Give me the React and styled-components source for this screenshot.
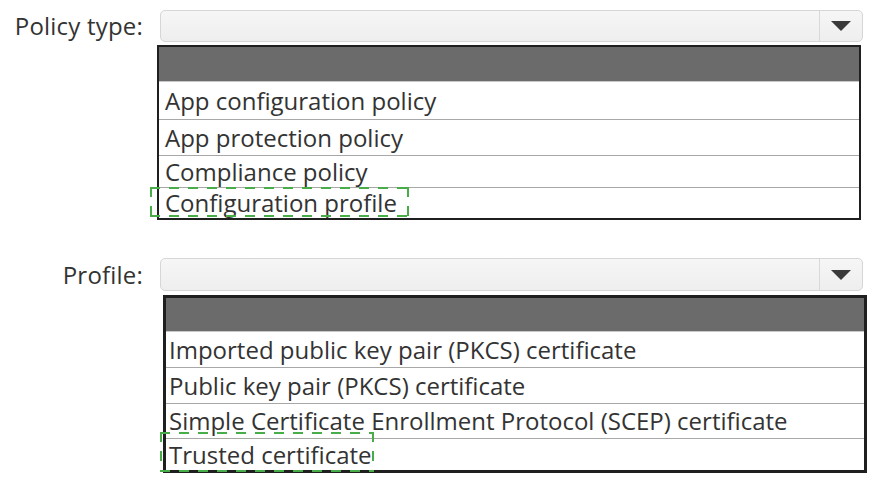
import React from 'react'
import styled, { createGlobalStyle } from 'styled-components'

const GlobalStyle = createGlobalStyle`
  html, body {
    margin: 0;
    padding: 0;
    background: #ffffff;
  }
  body {
    font-family: "Open Sans", "Liberation Sans", sans-serif;
    color: #333333;
  }
`

const sections = [
  {
    label: 'Policy type:',
    top: 10,
    selectHeight: 32,
    listOffset: -3,
    listGap: 3,
    border: 2,
    headerHeight: 34,
    pad: 6,
    options: [
      { text: 'App configuration policy', h: 38 },
      { text: 'App protection policy', h: 36 },
      { text: 'Compliance policy', h: 32 },
      { text: 'Configuration profile', h: 31, mark: { left: -9, top: -1, width: 259, height: 30 } },
    ],
  },
  {
    label: 'Profile:',
    top: 38,
    selectHeight: 33,
    listOffset: 3,
    listGap: 4,
    border: 3,
    headerHeight: 33,
    pad: 3,
    options: [
      { text: 'Imported public key pair (PKCS) certificate', h: 36 },
      { text: 'Public key pair (PKCS) certificate', h: 36 },
      { text: 'Simple Certificate Enrollment Protocol (SCEP) certificate', h: 35 },
      { text: 'Trusted certificate', h: 32, mark: { left: -6, top: -7, width: 214, height: 40 } },
    ],
  },
]

const App = () => {
  return (
    <>
      <GlobalStyle />
      <Page>
        {sections.map((s) => (
          <Section key={s.label} $top={s.top}>
            <Field>
              <Label>{s.label}</Label>
              <Select $height={s.selectHeight}>
                <SelectValue />
                <ArrowButton>
                  <Triangle />
                </ArrowButton>
              </Select>
            </Field>
            <List $offset={s.listOffset} $gap={s.listGap} $border={s.border}>
              <ListHeader $height={s.headerHeight} />
              {s.options.map((o) => (
                <Option key={o.text} $height={o.h} $pad={s.pad}>
                  {o.text}
                  {o.mark && (
                    <Mark
                      style={{
                        left: o.mark.left,
                        top: o.mark.top,
                        width: o.mark.width,
                        height: o.mark.height,
                      }}
                    />
                  )}
                </Option>
              ))}
            </List>
          </Section>
        ))}
      </Page>
    </>
  )
}

export default App

const Page = styled.div`
  width: 875px;
  height: 483px;
  overflow: hidden;
  display: flex;
  flex-direction: column;
`

const Section = styled.div`
  margin-top: ${(p) => p.$top}px;
  display: flex;
  flex-direction: column;
`

const Field = styled.div`
  display: grid;
  grid-template-columns: 143px 703px;
  column-gap: 17px;
  align-items: center;
`

const Label = styled.div`
  font-size: 24px;
  line-height: 1;
  letter-spacing: 0.2px;
  text-align: right;
  white-space: nowrap;
  color: #333333;
`

const Select = styled.div`
  height: ${(p) => p.$height}px;
  box-sizing: border-box;
  display: flex;
  border: 1px solid #d6d6d6;
  border-radius: 5px;
  background: linear-gradient(#f6f6f6, #eeeeee);
`

const SelectValue = styled.div`
  flex: 1;
`

const ArrowButton = styled.div`
  width: 42px;
  border-left: 1px solid #d9d9d9;
  display: flex;
  align-items: center;
  justify-content: center;
`

const Triangle = styled.div`
  width: 0;
  height: 0;
  border-left: 10px solid transparent;
  border-right: 10px solid transparent;
  border-top: 10px solid #3a3a3a;
  margin-left: -1px;
`

const List = styled.div`
  margin-left: ${(p) => 160 + p.$offset}px;
  margin-top: ${(p) => p.$gap}px;
  width: 704px;
  box-sizing: border-box;
  border: ${(p) => p.$border}px solid #1f1f1f;
  display: flex;
  flex-direction: column;
  background: #ffffff;
`

const ListHeader = styled.div`
  height: ${(p) => p.$height}px;
  background: #6b6b6b;
`

const Option = styled.div`
  position: relative;
  height: ${(p) => p.$height}px;
  box-sizing: border-box;
  border-top: 1px solid #a8a8a8;
  padding-left: ${(p) => p.$pad}px;
  display: flex;
  align-items: center;
  font-size: 24px;
  line-height: 1;
  white-space: nowrap;
  color: #333333;

  &:nth-child(2) {
    border-top-color: #c8c8c8;
  }
`

const dashH = 'repeating-linear-gradient(90deg, #48ad48 0 10px, transparent 10px 19px)'
const dashV = 'repeating-linear-gradient(180deg, #48ad48 0 10px, transparent 10px 19px)'

const Mark = styled.div`
  position: absolute;
  pointer-events: none;
  background:
    ${dashH} left top / 100% 2px no-repeat,
    ${dashH} left bottom / 100% 2px no-repeat,
    ${dashV} left top / 2px 100% no-repeat,
    ${dashV} right top / 2px 100% no-repeat;
`
